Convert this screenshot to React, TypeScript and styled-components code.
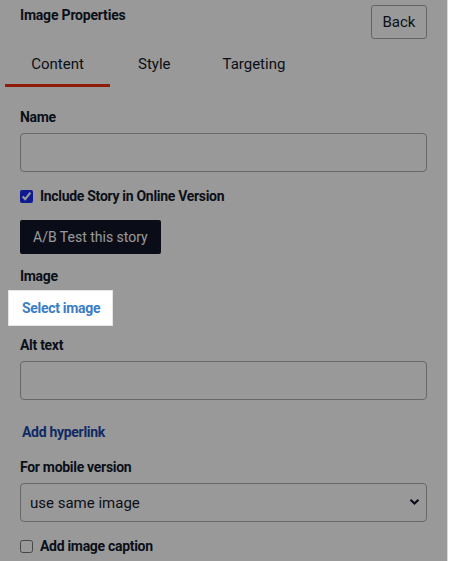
import { createGlobalStyle } from 'styled-components';
import styled from 'styled-components';

const GlobalStyle = createGlobalStyle`
  html, body {
    margin: 0;
    padding: 0;
    background: #ffffff;
    font-family: Roboto, 'Noto Sans', Arial, sans-serif;
    color: #131a2c;
  }
  * {
    box-sizing: border-box;
  }
`;

const Panel = styled.div`
  position: relative;
  width: 448px;
  min-height: 561px;
  padding: 0 20px;
  border-right: 1px solid #d8d8d8;
  overflow: hidden;
`;

// dims everything except the spotlighted element
const Dim = styled.div`
  position: absolute;
  inset: 0;
  background: rgba(0, 0, 0, 0.4);
  z-index: 1;
  pointer-events: none;
`;

const Header = styled.div`
  display: flex;
  justify-content: space-between;
  align-items: flex-start;
  padding-top: 5px;
`;

const Title = styled.h1`
  margin: 2px 0 0;
  font-size: 14px;
  font-weight: 700;
  letter-spacing: -0.2px;
`;

const BackButton = styled.button`
  width: 56px;
  height: 34px;
  background: #ffffff;
  border: 1px solid #a8a8a8;
  border-radius: 3px;
  font-family: inherit;
  font-size: 15px;
  color: #131a2c;
`;

const Tabs = styled.div`
  display: flex;
  margin: 4px 0 0 -15px;
`;

const Tab = styled.div<{ $active?: boolean }>`
  padding: 12px 0 11px;
  width: ${p => (p.$active ? '105px' : 'auto')};
  padding-left: ${p => (p.$active ? '0' : '28px')};
  padding-right: ${p => (p.$active ? '0' : '24px')};
  text-align: center;
  font-size: 15px;
  border-bottom: 3px solid ${p => (p.$active ? '#ee300d' : 'transparent')};
`;

const Label = styled.div`
  font-size: 14px;
  font-weight: 700;
  letter-spacing: -0.3px;
  line-height: 18px;
`;

const Field = styled.div<{ $top: number }>`
  margin-top: ${p => p.$top}px;
`;

const TextInput = styled.input`
  display: block;
  width: 100%;
  height: 39px;
  margin-top: 7px;
  border: 1px solid #aeaeae;
  border-radius: 4px;
  background: #ffffff;
`;

const CheckRow = styled.label<{ $top: number }>`
  display: flex;
  align-items: center;
  gap: 7px;
  margin-top: ${p => p.$top}px;
  font-size: 14px;
  font-weight: 700;
  letter-spacing: -0.3px;
  input {
    width: 13px;
    height: 13px;
    margin: 0;
    accent-color: #1a2cf0;
  }
`;

const DarkButton = styled.button`
  display: block;
  margin-top: 16px;
  height: 34px;
  padding: 0 13px;
  background: #111428;
  color: #ffffff;
  border: none;
  border-radius: 2px;
  font-family: inherit;
  font-size: 14px;
`;

const Spotlight = styled.div`
  position: relative;
  z-index: 2;
  display: inline-block;
  margin: 5px 0 0 -12px;
  padding: 7px 12px 8px 13px;
  background: #ffffff;
  border: 1px solid #e4e4e4;
`;

const LinkText = styled.a<{ $color: string }>`
  font-size: 14px;
  font-weight: 700;
  letter-spacing: -0.3px;
  color: ${p => p.$color};
  text-decoration: none;
`;

const LinkRow = styled.div`
  margin: 22px 0 0 2px;
`;

const SelectWrap = styled.div`
  position: relative;
  margin-top: 7px;
  svg {
    position: absolute;
    right: 7px;
    top: 15px;
    pointer-events: none;
  }
`;

const Select = styled.select`
  width: 100%;
  height: 39px;
  padding: 0 9px;
  appearance: none;
  border: 1px solid #aeaeae;
  border-radius: 4px;
  background: #ffffff;
  font-family: inherit;
  font-size: 15px;
  color: #131a2c;
`;

export default function App() {
  return (
    <Panel>
      <GlobalStyle />
      <Dim />
      <Header>
        <Title>Image Properties</Title>
        <BackButton>Back</BackButton>
      </Header>
      <Tabs>
        <Tab $active>Content</Tab>
        <Tab>Style</Tab>
        <Tab>Targeting</Tab>
      </Tabs>

      <Field $top={21}>
        <Label>Name</Label>
        <TextInput />
      </Field>

      <CheckRow $top={16}>
        <input type="checkbox" defaultChecked />
        Include Story in Online Version
      </CheckRow>

      <DarkButton>A/B Test this story</DarkButton>

      <Field $top={13}>
        <Label>Image</Label>
        <Spotlight>
          <LinkText $color="#3b7dc4">Select image</LinkText>
        </Spotlight>
      </Field>

      <Field $top={10}>
        <Label>Alt text</Label>
        <TextInput />
      </Field>

      <LinkRow>
        <LinkText $color="#1a47a8">Add hyperlink</LinkText>
      </LinkRow>

      <Field $top={17}>
        <Label>For mobile version</Label>
        <SelectWrap>
          <Select defaultValue="same">
            <option value="same">use same image</option>
          </Select>
          <svg width="11" height="8" viewBox="0 0 11 8">
            <path d="M1.5 1.8 L5.5 5.6 L9.5 1.8" fill="none" stroke="#131a2c" strokeWidth="2.2" />
          </svg>
        </SelectWrap>
      </Field>

      <CheckRow $top={16}>
        <input type="checkbox" />
        Add image caption
      </CheckRow>
    </Panel>
  );
}
